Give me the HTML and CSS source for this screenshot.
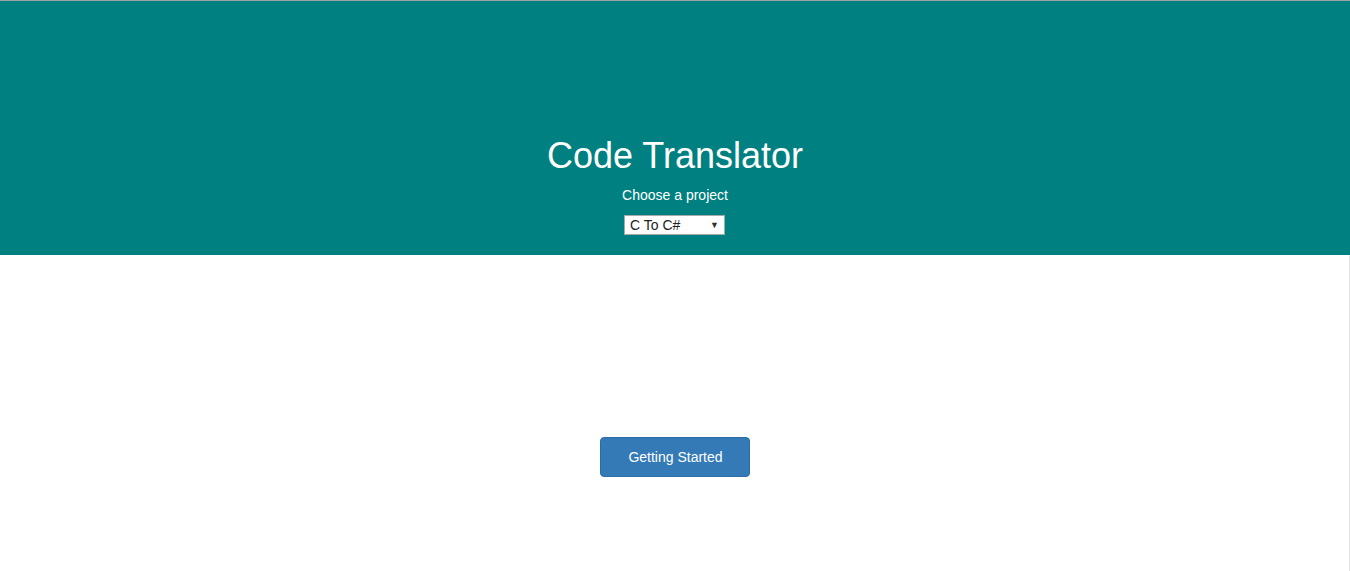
FILE: index.html
```html
<!DOCTYPE html>
<html>
<head>
<meta charset="utf-8">
<link rel="stylesheet" href="styles.css">
</head>
<body>
<div class="page">
  <header class="hero">
    <h1 class="title">Code Translator</h1>
    <p class="subtitle">Choose a project</p>
    <div class="select">
      <span class="select-value">C To C#</span>
      <span class="select-arrow">▼</span>
    </div>
  </header>
  <main class="main">
    <button class="btn">Getting Started</button>
  </main>
</div>
</body>
</html>
```
FILE: styles.css
```css
html, body {
  margin: 0;
  padding: 0;
  background: #fff;
}
body {
  font-family: "Liberation Sans", Arial, sans-serif;
  border-top: 1px solid #a0a0a0;
}
.page {
  display: flex;
  flex-direction: column;
  height: 570px;
}
.hero {
  background: #008080;
  color: #fff;
  height: 254px;
  box-sizing: border-box;
  padding-top: 134px;
  display: flex;
  flex-direction: column;
  align-items: center;
}
.title {
  margin: 0;
  font-size: 36px;
  font-weight: normal;
  line-height: 42px;
}
.subtitle {
  margin: 10px 0 0;
  font-size: 14px;
  line-height: 17px;
}
.select {
  margin-top: 11px;
  margin-left: -1px;
  width: 101px;
  height: 20px;
  box-sizing: border-box;
  background: #fff;
  border: 1px solid #a9a9a9;
  color: #222;
  display: flex;
  align-items: center;
  justify-content: space-between;
  padding: 0 5px 0 5px;
  font-size: 14px;
}
.select-arrow {
  font-size: 9px;
  color: #333;
}
.main {
  flex: 1;
  display: flex;
  justify-content: center;
  padding-top: 182px;
  border-right: 1px solid #e6e6e6;
}
.btn {
  width: 150px;
  height: 40px;
  padding: 0 0 0 2px;
  background: #337ab7;
  border: 1px solid #2e6da4;
  border-radius: 4px;
  color: #fff;
  font-family: "Liberation Sans", Arial, sans-serif;
  font-size: 14px;
}
```
